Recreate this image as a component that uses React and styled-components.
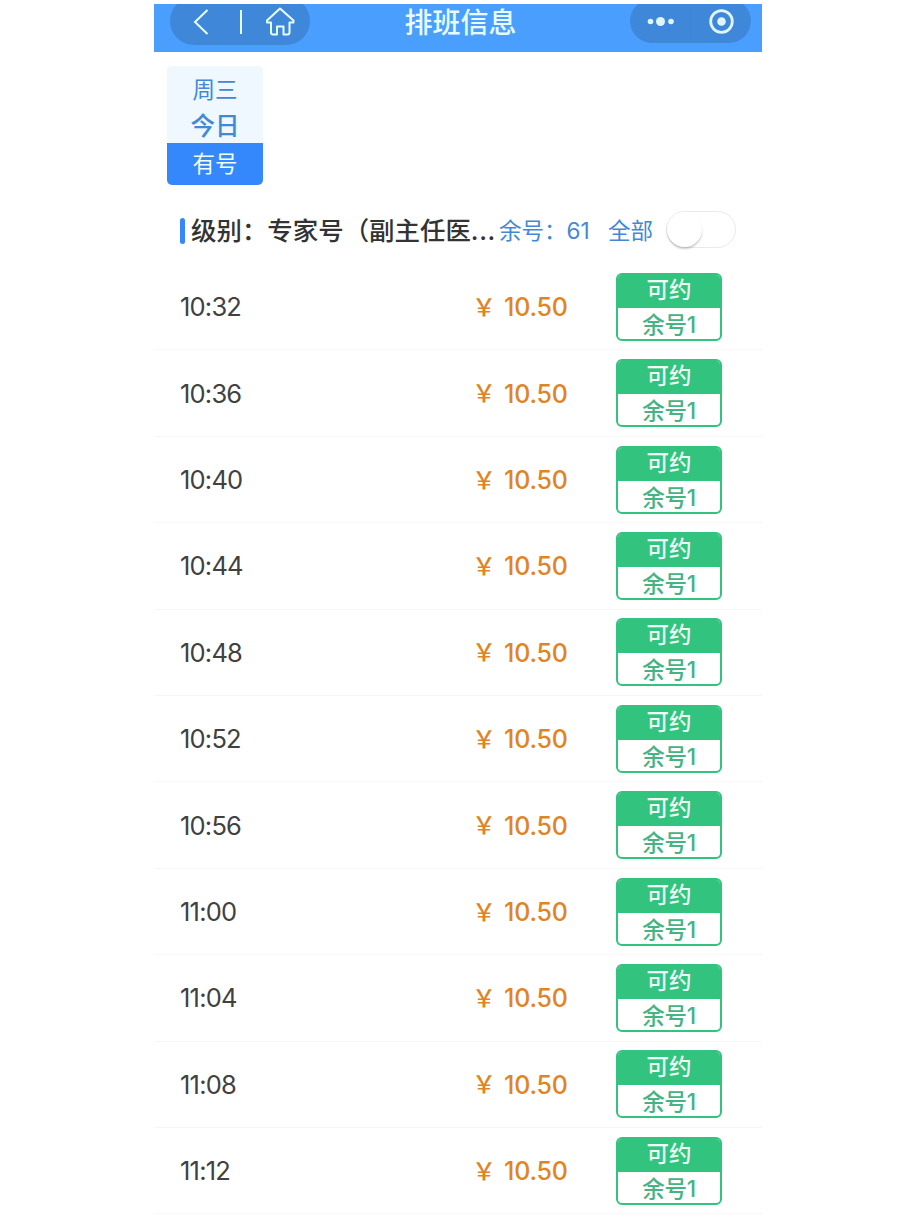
import React, { useState } from "react"
import styled, { createGlobalStyle, ThemeProvider } from "styled-components"

const theme = {
  colors: {
    header: `#4a9ffe`,
    capsule: `#3f87d8`,
    blue: `#3588fc`,
    textBlue: `#4388d4`,
    paleBlue: `#eff7ff`,
    green: `#32c37e`,
    textGreen: `#45b383`,
    orange: `#e08424`,
    dark: `#333333`,
    line: `#f6f6f6`,
  },
}

const slots = [
  `10:32`,
  `10:36`,
  `10:40`,
  `10:44`,
  `10:48`,
  `10:52`,
  `10:56`,
  `11:00`,
  `11:04`,
  `11:08`,
  `11:12`,
]

// -----------------------------------------------------------------------------
// Sub-components
// -----------------------------------------------------------------------------

const GlobalStyle = createGlobalStyle`
  * {
    box-sizing: border-box;
  }
  body {
    margin: 0;
    background: #ffffff;
    font-family: Inter, "Noto Sans CJK SC", sans-serif;
  }
`

const Screen = styled.main`
  width: 608px;
  height: 1222px;
  margin: 0 auto;
  padding-top: 4px;
  overflow: hidden;
`

const Header = styled.header`
  display: grid;
  grid-template-columns: 1fr auto 1fr;
  height: 48px;
  padding: 0 11px 0 16px;
  overflow: hidden;
  background: ${({ theme }) => theme.colors.header};
`

const Title = styled.h1`
  margin: 0;
  padding-top: 1px;
  font-size: 28px;
  line-height: 36px;
  font-weight: 500;
  color: #e8fbff;
`

const Capsule = styled.div`
  display: flex;
  justify-self: ${({ $end }) => ($end ? `end` : `start`)};
  width: ${({ $end }) => ($end ? 121 : 140)}px;
  height: ${({ $end }) => ($end ? 44 : 48)}px;
  margin-top: ${({ $end }) => ($end ? -5 : -7)}px;
  border-radius: 24px;
  background: ${({ theme }) => theme.colors.capsule};
`

const DateCard = styled.button`
  display: block;
  width: 96px;
  height: 119px;
  margin: 14px 0 0 13px;
  padding: 0;
  border: none;
  border-radius: 5px;
  overflow: hidden;
  font-family: inherit;
  text-align: center;
  color: ${({ theme }) => theme.colors.textBlue};
  background: ${({ theme }) => theme.colors.paleBlue};
`

const Weekday = styled.div`
  padding-top: 6px;
  font-size: 22.5px;
  line-height: 35px;
`

const Today = styled.div`
  height: 36px;
  font-size: 24.5px;
  line-height: 38px;
  font-weight: 500;
`

const DateStatus = styled.div`
  height: 42px;
  font-size: 22.5px;
  line-height: 42px;
  color: #f0ffff;
  background: ${({ theme }) => theme.colors.blue};
`

const LevelBar = styled.section`
  display: flex;
  align-items: center;
  height: 79px;
  padding: 12px 26px 0;
  white-space: nowrap;
`

const Marker = styled.span`
  width: 5px;
  height: 26px;
  margin-right: 6px;
  border-radius: 3px;
  background: ${({ theme }) => theme.colors.blue};
`

const Level = styled.h2`
  width: 308px;
  margin: 0;
  padding-top: 1px;
  font-size: 25.45px;
  line-height: 36px;
  font-weight: 500;
  color: ${({ theme }) => theme.colors.dark};
`

const Ellipsis = styled.span`
  letter-spacing: 0.6px;
`

const Remaining = styled.span`
  width: 109px;
  margin-top: -3px;
  font-size: 22.5px;
  color: ${({ theme }) => theme.colors.textBlue};
`

const AllLabel = styled(Remaining)`
  width: 58px;
`

const Switch = styled.button`
  flex: none;
  width: 70px;
  height: 37px;
  margin-top: -3px;
  padding: 0;
  border: 1.5px solid #eaeaea;
  border-radius: 19px;
  background: #ffffff;
`

const Thumb = styled.span`
  display: block;
  width: 35px;
  height: 35px;
  border-radius: 50%;
  background: #ffffff;
  box-shadow: 0 2px 2px rgba(0, 0, 0, 0.2);
  transform: translateX(${({ $on }) => ($on ? 32 : 0)}px);
`

const SlotList = styled.ul`
  margin: 0;
  padding: 0;
  list-style: none;
`

const Slot = styled.li`
  display: grid;
  grid-template-columns: 292px 144px 106px;
  align-items: center;
  height: 86.42px;
  padding-left: 26px;
  border-bottom: 1px solid ${({ theme }) => theme.colors.line};
`

const Time = styled.time`
  font-size: 25.5px;
  letter-spacing: -0.8px;
  color: #414141;
`

const Price = styled.span`
  display: flex;
  align-items: center;
  padding-top: 1px;
  font-size: 25px;
  font-weight: 500;
  letter-spacing: -0.2px;
  color: ${({ theme }) => theme.colors.orange};
`

const Yen = styled.span`
  width: 32px;
  margin-top: -4px;
  font-size: 24px;
`

const BookButton = styled.button`
  height: 68px;
  padding: 0;
  border: 2px solid ${({ theme }) => theme.colors.green};
  border-radius: 6px;
  overflow: hidden;
  font-family: inherit;
  font-size: 22.5px;
  font-weight: 500;
  text-align: center;
  background: #ffffff;
`

const BookState = styled.div`
  height: 33px;
  line-height: 30px;
  color: #edfff6;
  background: ${({ theme }) => theme.colors.green};
`

const BookCount = styled.div`
  height: 31px;
  line-height: 34px;
  letter-spacing: -0.2px;
  color: ${({ theme }) => theme.colors.textGreen};
`

// -----------------------------------------------------------------------------
// Icons
// -----------------------------------------------------------------------------

const NavIcons = () => (
  <svg width="140" height="48" fill="none" stroke="#e8ffff" strokeWidth="2">
    <path d="M37.5 13 25 25l12.5 12" />
    <path d="M71 13v24" />
    <path
      d="M110 11.5 97 23.5v2h4v10q0 2 2 2h4v-8h6.5v8h4q2 0 2-2v-10h4v-2Z"
      strokeLinejoin="round"
    />
  </svg>
)

const MenuIcons = () => (
  <svg width="121" height="44" fill="#dff6ff">
    <circle cx="20.5" cy="22.5" r="2.8" />
    <circle cx="30.5" cy="22.5" r="4.5" />
    <circle cx="41" cy="22.5" r="2.8" />
    <path d="M60.5 9v27" stroke="#3c84d5" />
    <circle cx="91.5" cy="22.5" r="10.8" fill="none" stroke="#dff6ff" strokeWidth="2.8" />
    <circle cx="91.5" cy="22.5" r="4.3" />
  </svg>
)

// -----------------------------------------------------------------------------
// Component
// -----------------------------------------------------------------------------

const App = () => {
  const [showAll, setShowAll] = useState(false)

  return (
    <ThemeProvider theme={theme}>
      <GlobalStyle />
      <Screen>
        <Header>
          <Capsule>
            <NavIcons />
          </Capsule>
          <Title>排班信息</Title>
          <Capsule $end>
            <MenuIcons />
          </Capsule>
        </Header>
        <DateCard>
          <Weekday>周三</Weekday>
          <Today>今日</Today>
          <DateStatus>有号</DateStatus>
        </DateCard>
        <LevelBar>
          <Marker />
          <Level>
            级别：专家号（副主任医<Ellipsis>...</Ellipsis>
          </Level>
          <Remaining>余号：61</Remaining>
          <AllLabel>全部</AllLabel>
          <Switch onClick={() => setShowAll(!showAll)}>
            <Thumb $on={showAll} />
          </Switch>
        </LevelBar>
        <SlotList>
          {slots.map((time) => (
            <Slot key={time}>
              <Time>{time}</Time>
              <Price>
                <Yen>￥</Yen>
                10.50
              </Price>
              <BookButton>
                <BookState>可约</BookState>
                <BookCount>余号1</BookCount>
              </BookButton>
            </Slot>
          ))}
        </SlotList>
      </Screen>
    </ThemeProvider>
  )
}

export default App
